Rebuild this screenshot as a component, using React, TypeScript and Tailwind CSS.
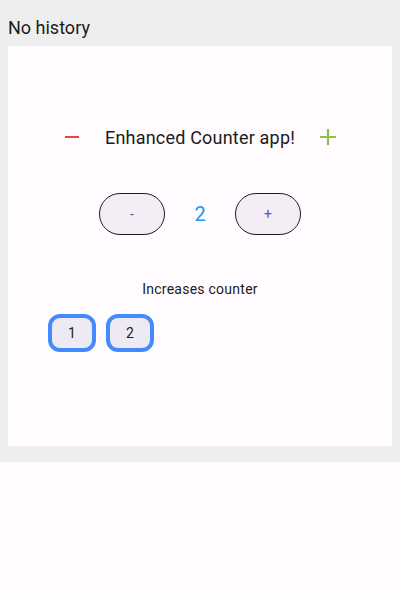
const font = { fontFamily: 'Roboto, "Noto Sans", sans-serif' };

function NumberChip({ label }: { label: string }) {
  return (
    <button className="w-[48px] h-[38px] rounded-[12px] border-[4px] border-[#448aff] bg-[#eeeaf3] text-[14px] tracking-[0.25px] text-[#1d1b20] flex items-center justify-center">
      {label}
    </button>
  );
}

function PillButton({ label }: { label: string }) {
  return (
    <button className="w-[66px] h-[42px] rounded-full border border-[#1d1b20] bg-[#f3eef6] text-[14px] text-[#6750a4] flex items-center justify-center">
      {label}
    </button>
  );
}

export default function App() {
  return (
    <div className="w-[400px] h-[600px] bg-[#fffbfe]" style={font}>
      <div className="bg-[#eeeeee] px-2 pt-[10px] pb-[16px]">
        <div className="h-[36px] leading-[36px] text-[18px] text-[#1d1b20]">No history</div>
        <div className="bg-[#fffbfe] h-[400px] flex flex-col">
          <div className="mt-[79px] h-[24px] flex items-center justify-center gap-[21px]">
            <svg width="24" height="24" viewBox="0 0 24 24">
              <path d="M5 12h14" stroke="#f44336" strokeWidth="2" />
            </svg>
            <span className="text-[18px] tracking-[0.2px] text-[#1d1b20]">Enhanced Counter app!</span>
            <svg width="24" height="24" viewBox="0 0 24 24">
              <path d="M4 12h16M12 4v16" stroke="#8bc34a" strokeWidth="2.2" />
            </svg>
          </div>
          <div className="mt-[44px] flex items-center justify-center">
            <PillButton label="-" />
            <div className="w-[70px] text-center text-[20px] text-[#2196f3]">2</div>
            <PillButton label="+" />
          </div>
          <div className="mt-[44px] text-center text-[14px] tracking-[0.25px] text-[#1d1b20]">Increases counter</div>
          <div className="mt-[14px] pl-[40px] flex gap-[10px]">
            <NumberChip label="1" />
            <NumberChip label="2" />
          </div>
        </div>
      </div>
    </div>
  );
}
